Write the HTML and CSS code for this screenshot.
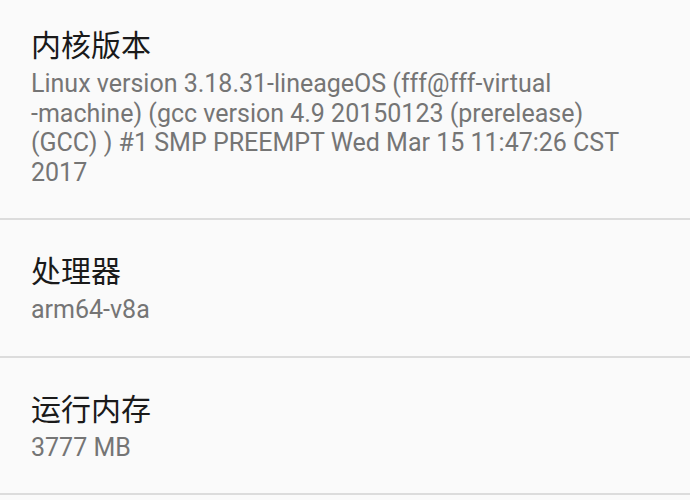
FILE: index.html
```html
<!DOCTYPE html>
<html lang="zh-CN">
<head>
    <meta charset="UTF-8">
    <meta name="viewport" content="width=device-width, initial-scale=1.0">
    <title>关于手机</title>
    <link rel="stylesheet" href="styles.css">
</head>
<body>
    <main class="pref-list">
        <div class="pref-item first">
            <div class="pref-title">内核版本</div>
            <div class="pref-summary">Linux version 3.18.31-lineageOS (fff@fff-virtual<br>-machine) (gcc version 4.9 20150123 (prerelease)<br>(GCC) ) #1 SMP PREEMPT Wed Mar 15 11:47:26 CST<br>2017</div>
        </div>
        <div class="pref-item">
            <div class="pref-title">处理器</div>
            <div class="pref-summary">arm64-v8a</div>
        </div>
        <div class="pref-item">
            <div class="pref-title">运行内存</div>
            <div class="pref-summary">3777 MB</div>
        </div>
    </main>
</body>
</html>
```

FILE: styles.css
```css
html, body {
    margin: 0;
    background-color: #fafafa;
}

body {
    font-family: Roboto, "Noto Sans CJK SC", sans-serif;
    overflow: hidden;
}

.pref-list {
    margin-top: -6px;
}

.pref-item {
    padding: 29px 31px 31px;
    border-bottom: 2px solid #dcdcdc;
}

.pref-title {
    font-family: "Noto Sans CJK SC", sans-serif;
    font-size: 30px;
    line-height: 40px;
    color: #1a1a1a;
}

.pref-summary {
    margin-top: 6px;
    font-size: 25px;
    line-height: 29.5px;
    color: #757575;
}
```
